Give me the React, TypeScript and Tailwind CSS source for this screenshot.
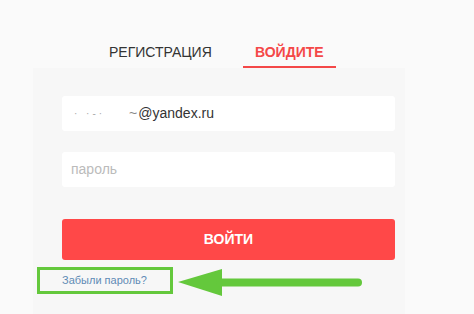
export default function App() {
  return (
    <div className="w-[474px] h-[314px] overflow-hidden bg-[#fafafa] font-['Liberation_Sans',Arial,sans-serif]">
      {/* Tabs */}
      <div className="flex pt-[40px] h-[68px]">
        <div className="ml-[109px] pt-[4px] text-[14px] leading-[16px] text-[#333]">РЕГИСТРАЦИЯ</div>
        <div className="ml-[31px] w-[93px] h-[28px] pt-[4px] border-b-2 border-[#f44848] text-center text-[14px] leading-[16px] font-bold text-[#f44848]">
          ВОЙДИТЕ
        </div>
      </div>

      {/* Form panel */}
      <div className="ml-[33px] w-[372px] h-[246px] bg-[#f7f7f7] px-[29px] pt-[28px]">
        <div className="h-[35px] w-[333px] rounded-[3px] bg-white flex items-center pl-[12px] text-[14px] text-[#333]">
          <span className="text-[#aaa] text-[10px] tracking-[3px] mr-[24px]">· ·-·</span>
          <span className="text-[#888] mr-[1px]">~</span>@yandex.ru
        </div>
        <div className="mt-[21px] h-[35px] w-[333px] rounded-[3px] bg-white flex items-center pl-[9px] text-[14px] text-[#bbb]">
          пароль
        </div>
        <div className="mt-[32px] h-[41px] w-[333px] rounded-[3px] bg-[#ff4848] flex items-center justify-center text-[14px] font-bold text-white">
          ВОЙТИ
        </div>
      </div>

      {/* Forgot password + annotation */}
      <div className="relative -mt-[49px] flex items-center">
        <div className="ml-[37px] w-[136px] h-[27px] border-[3px] border-[#64c83c] flex items-center pl-[22px] text-[11px] text-[#5f8bb5]">
          Забыли пароль?
        </div>
        <svg width="184" height="27" viewBox="0 0 184 27" className="ml-[5px] mt-[4px]">
          <polygon points="0,13 44,0 44,27" fill="#64c83c" />
          <line x1="42" y1="13.5" x2="180" y2="13.5" stroke="#64c83c" strokeWidth="8" strokeLinecap="round" />
        </svg>
      </div>
    </div>
  )
}
